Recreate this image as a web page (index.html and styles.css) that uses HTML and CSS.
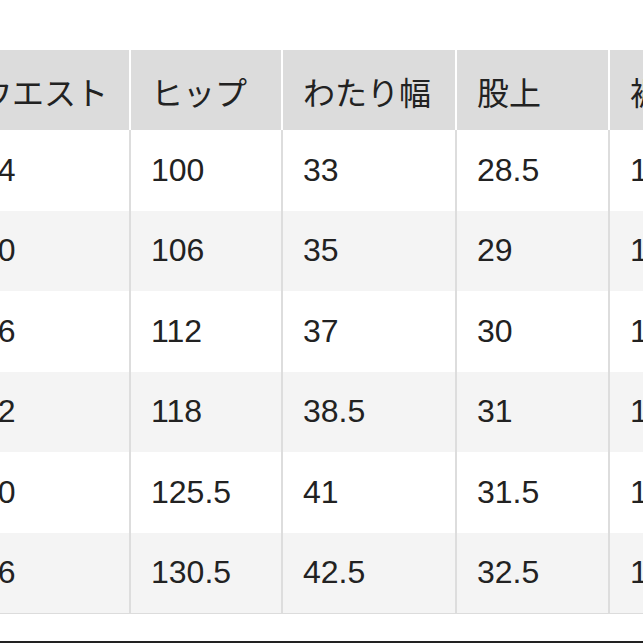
FILE: index.html
```html
<!DOCTYPE html>
<html lang="ja">
<head>
<meta charset="utf-8">
<link rel="stylesheet" href="styles.css">
</head>
<body>
<div class="page">
  <div class="table">
    <div class="row head">
      <div class="cell">ウエスト</div>
      <div class="cell">ヒップ</div>
      <div class="cell">わたり幅</div>
      <div class="cell">股上</div>
      <div class="cell">裾幅</div>
    </div>
    <div class="row">
      <div class="cell">64</div><div class="cell">100</div><div class="cell">33</div><div class="cell">28.5</div><div class="cell">17</div>
    </div>
    <div class="row alt">
      <div class="cell">70</div><div class="cell">106</div><div class="cell">35</div><div class="cell">29</div><div class="cell">17.5</div>
    </div>
    <div class="row">
      <div class="cell">76</div><div class="cell">112</div><div class="cell">37</div><div class="cell">30</div><div class="cell">18</div>
    </div>
    <div class="row alt">
      <div class="cell">82</div><div class="cell">118</div><div class="cell">38.5</div><div class="cell">31</div><div class="cell">18.5</div>
    </div>
    <div class="row">
      <div class="cell">90</div><div class="cell">125.5</div><div class="cell">41</div><div class="cell">31.5</div><div class="cell">19</div>
    </div>
    <div class="row alt">
      <div class="cell">96</div><div class="cell">130.5</div><div class="cell">42.5</div><div class="cell">32.5</div><div class="cell">19.5</div>
    </div>
  </div>
  <div class="spacer"></div>
  <div class="rule"></div>
</div>
</body>
</html>
```

FILE: styles.css
```css
* { box-sizing: border-box; }
html, body {
  margin: 0;
  padding: 0;
  background: #fff;
  overflow: hidden;
}
.page {
  width: 643px;
  height: 643px;
  overflow: hidden;
  display: flex;
  flex-direction: column;
  padding-top: 50px;
}
.table {
  margin-left: -40px;
  width: 760px;
  border-bottom: 1px solid #dcdcdc;
  font-family: "Liberation Sans", "Noto Sans CJK JP", sans-serif;
  font-size: 32px;
  color: #222;
}
.row {
  display: grid;
  grid-template-columns: 171px 152px 174px 153px 110px;
  height: 80.5px;
  background: #fff;
}
.row.alt { background: #f4f4f4; }
.row.head {
  height: 80px;
  background: #fff;
}
.cell {
  display: flex;
  align-items: center;
  padding-left: 20px;
  border-right: 2px solid #dddddd;
  white-space: nowrap;
  overflow: hidden;
}
.head .cell {
  background: #dcdcdc;
  border-right-color: #fff;
  font-family: "Noto Sans CJK JP", sans-serif;
  font-size: 32px;
  padding-top: 2px;
}
.spacer { flex: 1; }
.rule {
  height: 2px;
  background: #222;
}
```
